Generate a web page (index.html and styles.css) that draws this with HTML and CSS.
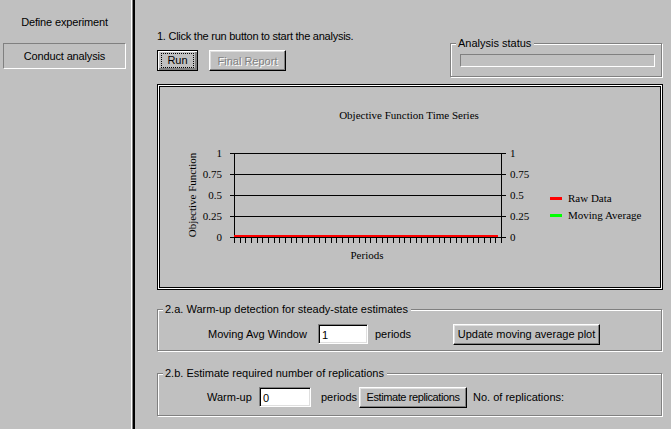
FILE: index.html
```html
<!DOCTYPE html>
<html>
<head>
<meta charset="utf-8">
<link rel="stylesheet" href="styles.css">
</head>
<body>
<div class="app">
  <nav class="sidebar">
    <div class="nav-item">Define experiment</div>
    <div class="nav-item active">Conduct analysis</div>
  </nav>
  <div class="divider"></div>
  <main class="main">
    <section class="top">
      <div class="run-col">
        <p class="step">1. Click the run button to start the analysis.</p>
        <div class="buttons">
          <button class="btn btn-default btn-run"><span class="focus">Run</span></button>
          <button class="btn btn-report" disabled>Final Report</button>
        </div>
      </div>
      <fieldset class="group status">
        <legend>Analysis status</legend>
        <div class="progress"></div>
      </fieldset>
    </section>

    <div class="chart-frame">
      <svg class="chart" width="504" height="204" viewBox="158 85 504 204">
        <text class="chart-title" x="409" y="119" text-anchor="middle">Objective Function Time Series</text>
        <text class="chart-axis-title" transform="translate(196 195) rotate(-90)" text-anchor="middle">Objective Function</text>
        <g class="labels-left" text-anchor="end">
          <text x="222" y="157">1</text>
          <text x="222" y="178">0.75</text>
          <text x="222" y="199">0.5</text>
          <text x="222" y="220">0.25</text>
          <text x="222" y="241">0</text>
        </g>
        <g class="labels-right">
          <text x="510" y="157">1</text>
          <text x="510" y="178">0.75</text>
          <text x="510" y="199">0.5</text>
          <text x="510" y="220">0.25</text>
          <text x="510" y="241">0</text>
        </g>
        <path class="grid" d="M230 153.5H506M230 174.5H506M230 195.5H506M230 216.5H506M230 237.5H506M234.5 153V243M501.5 153V243"/>
        <path class="ticks" d="M240.5 237v6M245.5 237v6M251.5 237v6M257.5 237v6M262.5 237v6M268.5 237v6M274.5 237v6M279.5 237v6M285.5 237v6M291.5 237v6M296.5 237v6M302.5 237v6M308.5 237v6M314.5 237v6M319.5 237v6M325.5 237v6M331.5 237v6M336.5 237v6M342.5 237v6M348.5 237v6M353.5 237v6M359.5 237v6M365.5 237v6M370.5 237v6M376.5 237v6M382.5 237v6M387.5 237v6M393.5 237v6M399.5 237v6M404.5 237v6M410.5 237v6M416.5 237v6M421.5 237v6M427.5 237v6M433.5 237v6M439.5 237v6M444.5 237v6M450.5 237v6M456.5 237v6M461.5 237v6M467.5 237v6M473.5 237v6M478.5 237v6M484.5 237v6M490.5 237v6M495.5 237v6"/>
        <rect class="series-raw" x="234" y="235" width="264" height="2"/>
        <text class="chart-xlabel" x="367" y="259" text-anchor="middle">Periods</text>
        <rect class="series-raw" x="550" y="197" width="12" height="3"/>
        <text class="legend-text" x="568" y="202">Raw Data</text>
        <rect class="series-avg" x="550" y="214" width="12" height="3"/>
        <text class="legend-text" x="568" y="219">Moving Average</text>
      </svg>
    </div>

    <fieldset class="group warmup">
      <legend>2.a. Warm-up detection for steady-state estimates</legend>
      <div class="row row-a">
        <span class="lbl lbl-window">Moving Avg Window</span>
        <input class="field field-window" type="text" value="1">
        <span class="lbl lbl-periods-a">periods</span>
        <button class="btn btn-update">Update moving average plot</button>
      </div>
    </fieldset>

    <fieldset class="group reps">
      <legend>2.b. Estimate required number of replications</legend>
      <div class="row row-b">
        <span class="lbl lbl-warm">Warm-up</span>
        <input class="field field-warm" type="text" value="0">
        <span class="lbl lbl-periods-b">periods</span>
        <button class="btn btn-estimate">Estimate replications</button>
        <span class="lbl lbl-noreps">No. of replications:</span>
      </div>
    </fieldset>
  </main>
</div>
</body>
</html>
```
FILE: styles.css
```css
* { box-sizing: border-box; }
html, body {
  margin: 0;
  padding: 0;
  width: 671px;
  height: 429px;
  overflow: hidden;
  background: #c0c0c0;
}
body {
  font-family: "Liberation Sans", Arial, sans-serif;
  font-size: 11px;
  color: #000;
}
.app {
  display: flex;
  height: 429px;
}
.sidebar {
  width: 131px;
  flex: none;
  display: flex;
  flex-direction: column;
  gap: 8px;
  padding: 9px 5px 0 3px;
}
.nav-item {
  height: 26px;
  line-height: 24px;
  text-align: center;
  border: 1px solid transparent;
  letter-spacing: -0.15px;
}
.nav-item.active {
  border-color: #808080 #fff #fff #808080;
}
.divider {
  width: 4px;
  flex: none;
  background: #808080;
  border-left: 1px solid #fff;
  border-right: 2px solid #000;
}
.main {
  flex: 1;
  padding: 0 8px 0 22px;
  display: flex;
  flex-direction: column;
}
.top {
  display: flex;
  justify-content: space-between;
  align-items: flex-start;
  height: 77px;
}
.run-col {
  padding-top: 30px;
}
.step {
  margin: 0;
  line-height: 13px;
  letter-spacing: -0.25px;
}
.buttons {
  display: flex;
  gap: 11px;
  margin-top: 7px;
}
.btn {
  font-family: "Liberation Sans", Arial, sans-serif;
  font-size: 11px;
  color: #000;
  background: #c0c0c0;
  height: 21px;
  padding: 0;
  border: 1px solid;
  border-color: #fff #000 #000 #fff;
  box-shadow: inset -1px -1px 0 #808080, inset 1px 1px 0 #dfdfdf;
  border-radius: 0;
  display: flex;
  align-items: center;
  justify-content: center;
}
.btn-default {
  border-color: #000;
  box-shadow: inset 1px 1px 0 #fff, inset -1px -1px 0 #808080, inset -2px -2px 0 #808080;
}
.btn-run { width: 41px; }
.focus {
  display: block;
  width: 33px;
  height: 15px;
  line-height: 13px;
  border: 1px dotted #000;
  margin-top: -1px;
}
.btn-report {
  width: 77px;
  color: #808080;
  text-shadow: 1px 1px 0 #fff;
}
.group {
  margin: 0;
  padding: 0;
  min-width: 0;
  border: 1px solid #808080;
  box-shadow: 1px 1px 0 #fff, inset 1px 1px 0 #fff;
}
.group legend {
  line-height: 13px;
  padding: 0 3px 0 2px;
  margin-left: 5px;
  background: #c0c0c0;
}
.status {
  margin-top: 37px;
  margin-right: 1px;
  width: 212px;
  height: 40px;
}
.progress {
  height: 13px;
  margin: 4px 6px 0 9px;
  border: 1px solid;
  border-color: #808080 #fff #fff #808080;
}
.chart-frame {
  margin-top: 7px;
  width: 506px;
  height: 206px;
  border: 1px solid #000;
  box-shadow: inset 0 0 0 1px #fff, inset 0 0 0 2px #000;
}
.chart {
  display: block;
  font-family: "Liberation Serif", "Times New Roman", serif;
  font-size: 11px;
}
.chart text { fill: #000; }
.grid, .ticks {
  stroke: #000;
  stroke-width: 1;
  fill: none;
}
.series-raw { fill: #ff0000; }
.series-avg { fill: #00ff00; }
.warmup {
  margin-top: 13px;
  width: 505px;
  height: 48px;
}
.reps {
  margin-top: 16px;
  width: 505px;
  height: 49px;
}
.row {
  display: flex;
  align-items: center;
  height: 20px;
}
.row-a { margin: 8px 0 0 50px; }
.row-b { margin: 7px 0 0 49px; }
.lbl { white-space: nowrap; }
.field {
  height: 20px;
  border: 1px solid;
  border-color: #808080 #fff #fff #808080;
  box-shadow: inset 1px 1px 0 #000, inset -1px -1px 0 #dfdfdf;
  background: #fff;
  font-family: "Liberation Sans", Arial, sans-serif;
  font-size: 11px;
  padding: 2px 0 0 3px;
  outline: none;
  border-radius: 0;
  margin: 0;
}
.lbl-window { width: 110px; }
.field-window { width: 50px; }
.lbl-periods-a { width: 85px; padding-left: 7px; }
.btn-update { width: 147px; }
.lbl-warm { width: 52px; }
.field-warm { width: 52px; }
.lbl-periods-b { width: 48px; padding-left: 10px; }
.btn-estimate { width: 108px; letter-spacing: -0.4px; }
.lbl-noreps { padding-left: 6px; }
```
